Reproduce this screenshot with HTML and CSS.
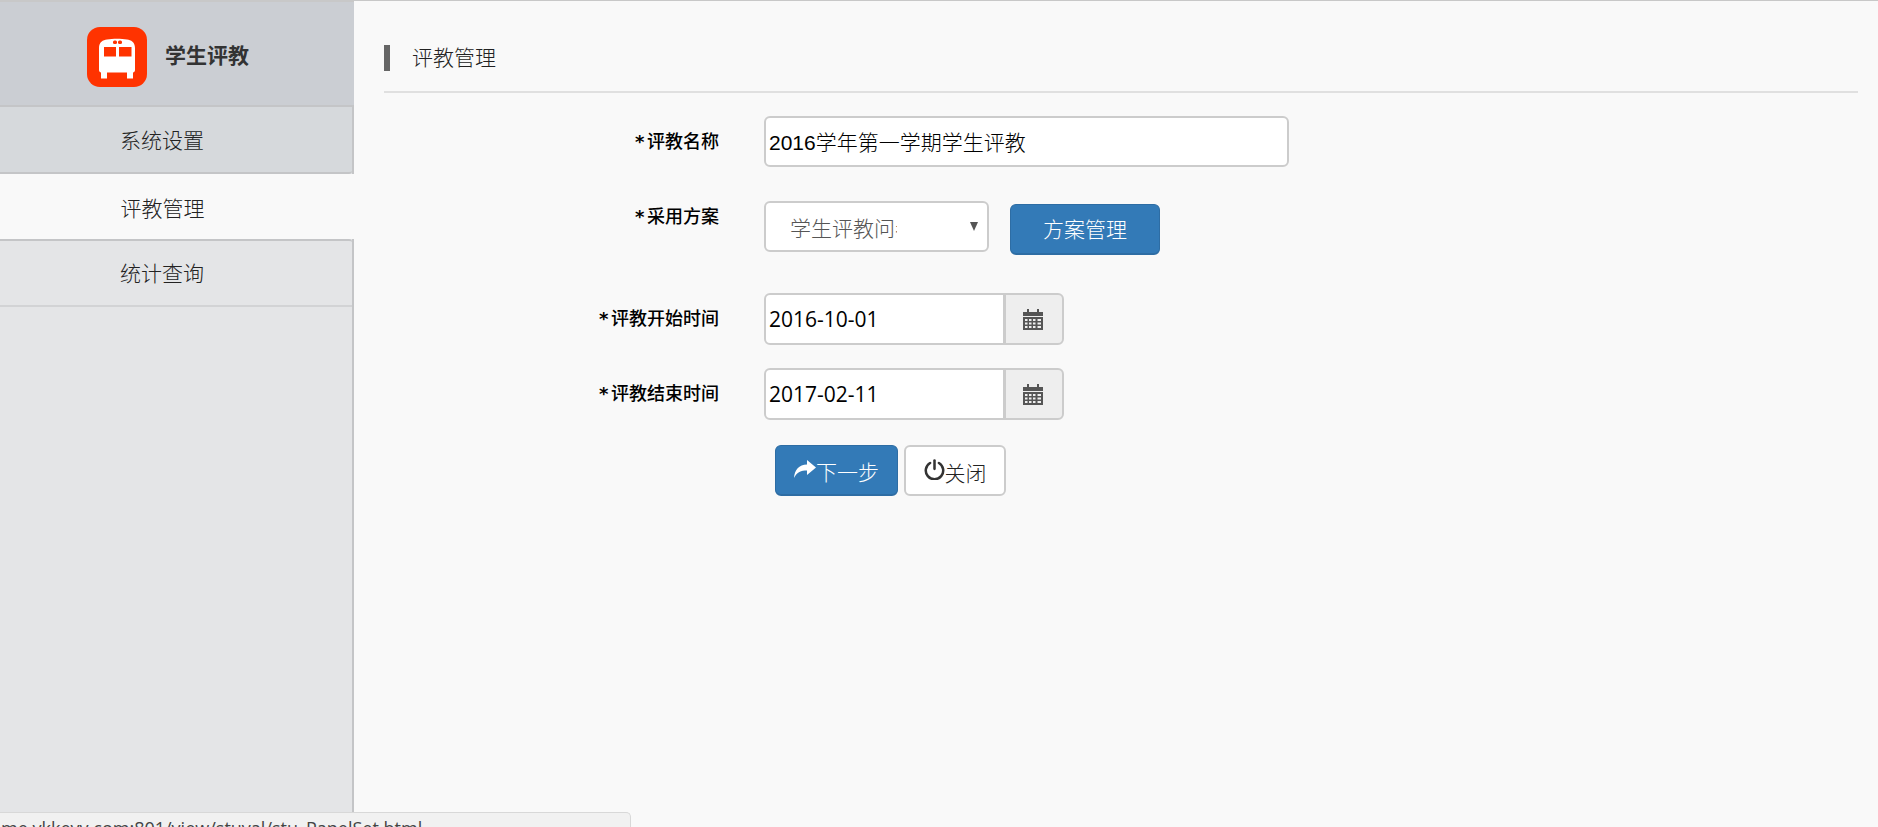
FILE: index.html
```html
<!DOCTYPE html>
<html lang="zh-CN">
<head>
<meta charset="utf-8">
<title>学生评教</title>
<link rel="stylesheet" href="styles.css">
</head>
<body>
<div class="page">
  <aside class="sidebar">
    <div class="brand">
      <svg class="logo" viewBox="0 0 60 60" aria-hidden="true">
        <rect width="60" height="60" rx="13" fill="#ff3300"/>
        <path fill="#fff" d="M12 21c0-6 4-8 8-8.500 6-1 14-1 20 0 4 .5 8 2.500 8 8.500v22c0 1.500-1 2.500-2 2.500v6h-6v-6H20v6h-6v-6c-1 0-2-1-2-2.500z"/>
        <rect x="17" y="20" width="12" height="9.500" fill="#ff3300"/>
        <rect x="32" y="20" width="12.500" height="9.500" fill="#ff3300"/>
        <rect x="26" y="13.500" width="4" height="3.500" rx="1.500" fill="#ff3300"/>
        <rect x="31" y="13.500" width="4" height="3.500" rx="1.500" fill="#ff3300"/>
      </svg>
      <span class="brand-name">学生评教</span>
    </div>
    <nav class="nav">
      <a class="nav-item nav-first">系统设置</a>
      <a class="nav-item nav-active">评教管理</a>
      <a class="nav-item nav-last">统计查询</a>
    </nav>
  </aside>

  <main class="main">
    <h1 class="title"><span class="title-bar"></span>评教管理</h1>
    <form class="form">
      <div class="row row-name">
        <label class="label"><span class="req">*</span>评教名称</label>
        <input class="field field-name" type="text" value="2016学年第一学期学生评教">
      </div>
      <div class="row row-plan">
        <label class="label label-plan"><span class="req">*</span>采用方案</label>
        <div class="select-wrap">
          <select class="select"><option>学生评教问卷</option></select>
          <span class="select-arrow"></span>
        </div>
        <button class="btn btn-primary btn-plan" type="button">方案管理</button>
      </div>
      <div class="row row-start">
        <label class="label"><span class="req">*</span>评教开始时间</label>
        <div class="date">
          <input class="field field-date" type="text" value="2016-10-01">
          <span class="addon">
            <svg class="cal" viewBox="0 0 20 21" aria-hidden="true">
              <path fill="#555" d="M0 3h4V0h2v3h8V0h2v3h4v4H0z"/>
              <path fill="#555" fill-rule="evenodd" d="M0 8h20v13H0zM2 10v2h2.500v-2zM6 10v2h2.500v-2zM10 10v2h2.500v-2zM14.500 10v2H18v-2zM2 13.500v2h2.500v-2zM6 13.500v2h2.500v-2zM10 13.500v2h2.500v-2zM14.500 13.500v2H18v-2zM2 17v2h2.500v-2zM6 17v2h2.500v-2zM10 17v2h2.500v-2zM14.500 17v2H18v-2z"/>
            </svg>
          </span>
        </div>
      </div>
      <div class="row row-end">
        <label class="label"><span class="req">*</span>评教结束时间</label>
        <div class="date">
          <input class="field field-date" type="text" value="2017-02-11">
          <span class="addon">
            <svg class="cal" viewBox="0 0 20 21" aria-hidden="true">
              <path fill="#555" d="M0 3h4V0h2v3h8V0h2v3h4v4H0z"/>
              <path fill="#555" fill-rule="evenodd" d="M0 8h20v13H0zM2 10v2h2.500v-2zM6 10v2h2.500v-2zM10 10v2h2.500v-2zM14.500 10v2H18v-2zM2 13.500v2h2.500v-2zM6 13.500v2h2.500v-2zM10 13.500v2h2.500v-2zM14.500 13.500v2H18v-2zM2 17v2h2.500v-2zM6 17v2h2.500v-2zM10 17v2h2.500v-2zM14.500 17v2H18v-2z"/>
            </svg>
          </span>
        </div>
      </div>
      <div class="actions">
        <button class="btn btn-primary btn-next" type="button">
          <svg class="icon-share" viewBox="0 0 22 18" aria-hidden="true">
            <path fill="#fff" d="M13 0l9 7.500-9 7.500v-4.500C7 10.500 3 12 0 18 .5 10 5 4.800 13 4.500z"/>
          </svg>下一步
        </button>
        <button class="btn btn-default btn-close" type="button">
          <svg class="icon-power" viewBox="0 0 20 20" aria-hidden="true">
            <path fill="none" stroke="#333" stroke-width="2.400" stroke-linecap="round" d="M5.800 3.800a8.300 8.300 0 1 0 8.400 0"/>
            <path fill="none" stroke="#333" stroke-width="2.400" stroke-linecap="round" d="M10 1.400v8"/>
          </svg>关闭
        </button>
      </div>
    </form>
  </main>
</div>
<div class="status"><span class="status-text">me.ykkeyy.com:801/view/stuval/stu_PanelSet.html</span></div>
</body>
</html>
```

FILE: styles.css
```css
* { box-sizing: border-box; }

html, body {
  margin: 0;
  height: 100%;
  overflow: hidden;
}

body {
  background: #f9f9f9;
  color: #333;
  font-family: "Open Sans", "Noto Sans CJK SC", sans-serif;
  font-size: 21px;
}

.page {
  display: flex;
  height: 827px;
  border-top: 1px solid #c8c8c8;
}

/* sidebar */
.sidebar {
  width: 354px;
  flex: none;
  display: flex;
  flex-direction: column;
  background: #e4e5e7;
  border-right: 2px solid #c4c5c7;
}

.brand {
  height: 106px;
  margin-right: -2px;
  display: flex;
  align-items: center;
  gap: 19px;
  padding: 0 0 0 87px;
  background: #cbced3;
  border-top: 1px solid #c8c8c8;
  border-bottom: 2px solid #c4c5c7;
}

.logo {
  width: 60px;
  height: 60px;
  flex: none;
  margin-top: 7px;
}

.brand-name {
  margin-top: 2px;
  margin-left: -1px;
  font-family: "Noto Sans CJK SC", sans-serif;
  font-weight: 700;
  line-height: 1;
  color: #333;
}

.nav {
  display: flex;
  flex-direction: column;
}

.nav-item {
  display: flex;
  align-items: center;
  justify-content: center;
  padding-right: 28px;
  font-family: "Noto Sans CJK SC", sans-serif;
  font-weight: 300;
  color: #222;
}

.nav-first {
  height: 67px;
  padding-bottom: 2px;
  background: #d6d9dc;
  border-bottom: 2px solid #c4c5c7;
  border-bottom-right-radius: 3px;
}

.nav-active {
  height: 65px;
  margin-right: -2px;
  padding-right: 29px;
  background: #f9f9f9;
}

.nav-last {
  height: 68px;
  padding-bottom: 2px;
  background: #e4e5e7;
  border-top: 2px solid #c4c5c7;
  border-bottom: 2px solid #d2d3d5;
  border-top-right-radius: 3px;
}

/* main */
.main {
  flex: 1;
  min-width: 0;
  padding: 0 20px 0 30px;
}

.title {
  display: flex;
  align-items: flex-start;
  height: 92px;
  margin: 0;
  padding: 25px 0 0;
  font-family: "Noto Sans CJK SC", sans-serif;
  font-size: 21px;
  font-weight: 300;
  line-height: 60px;
  color: #222;
  border-bottom: 2px solid #e0e0e0;
}

.title-bar {
  width: 6px;
  height: 26px;
  margin: 19px 22px 0 0;
  background: #666;
}

.form {
  display: flex;
  flex-direction: column;
}

.row {
  display: flex;
  align-items: flex-start;
}

.row-name { margin-top: 23px; }
.row-plan { margin-top: 34px; }
.row-start { margin-top: 38px; }
.row-end { margin-top: 23px; }

.label {
  width: 335px;
  flex: none;
  text-align: right;
  font-family: "Noto Sans CJK SC", serif;
  font-size: 18px;
  font-weight: 500;
  line-height: 24px;
  color: #000;
  padding-top: 12px;
}

.label-plan { padding-top: 2px; }

.req {
  display: inline-block;
  width: 12px;
  font-family: "DejaVu Sans", sans-serif;
  font-size: 18px;
  font-weight: 700;
  line-height: 1;
  text-align: left;
}

.field {
  height: 51px;
  margin: 0 0 0 45px;
  padding: 0 3px;
  background: #fff;
  border: 2px solid #ccc;
  border-radius: 6px;
  font-family: "Open Sans", "Noto Sans CJK SC", sans-serif;
  font-size: 21px;
  color: #000;
  outline: none;
}

.field-name {
  width: 525px;
  padding-bottom: 2px;
  font-family: "Liberation Sans", "Noto Sans CJK SC", sans-serif;
  font-weight: 300;
}

.select-wrap {
  position: relative;
  margin-left: 45px;
  width: 225px;
  height: 51px;
}

.select {
  width: 100%;
  height: 100%;
  padding: 0 90px 0 24px;
  appearance: none;
  -webkit-appearance: none;
  background: #fff;
  border: 2px solid #ccc;
  border-radius: 6px;
  font-family: "Noto Sans CJK SC", sans-serif;
  font-size: 21px;
  font-weight: 300;
  color: #555;
  outline: none;
}

.select-arrow {
  position: absolute;
  left: 206px;
  top: 21px;
  border-left: 4.500px solid transparent;
  border-right: 4.500px solid transparent;
  border-top: 9px solid #555;
}

.btn {
  display: inline-flex;
  align-items: center;
  justify-content: center;
  height: 51px;
  padding: 0;
  border-radius: 6px;
  font-family: "Noto Sans CJK SC", sans-serif;
  font-size: 21px;
  font-weight: 300;
  line-height: 1;
}

.btn-primary {
  background: #337ab7;
  border: 1px solid #2e6da4;
  border-bottom-width: 2px;
  color: #fff;
}

.btn-default {
  background: #fff;
  border: 2px solid #ccc;
  color: #222;
}

.btn-plan {
  width: 150px;
  margin: 3px 0 0 21px;
  padding-bottom: 2px;
}

.date {
  display: flex;
}

.field-date {
  width: 241px;
  height: 52px;
  border-radius: 6px 0 0 6px;
}

.addon {
  width: 60px;
  height: 52px;
  margin-left: -1px;
  display: flex;
  align-items: center;
  justify-content: center;
  background: #eee;
  border: 2px solid #ccc;
  border-radius: 0 6px 6px 0;
}

.cal {
  width: 20px;
  height: 21px;
  margin-right: 2px;
}

.actions {
  display: flex;
  gap: 6px;
  margin-top: 25px;
  margin-left: 391px;
}

.btn-next,
.btn-close {
  padding-top: 3px;
}

.btn-next {
  width: 123px;
}

.btn-close {
  width: 102px;
}

.icon-share {
  width: 22px;
  height: 18px;
  flex: none;
  margin-top: -6px;
}

.icon-power {
  width: 21px;
  height: 21px;
  flex: none;
  margin-top: -5px;
}

/* link preview over the page corner */
.status {
  position: absolute;
  left: 0;
  bottom: 0;
  width: 631px;
  height: 15px;
  overflow: hidden;
  background: #f1f1f1;
  border-top: 1px solid #d8d8d8;
  border-right: 1px solid #d8d8d8;
  border-top-right-radius: 5px;
}

.status-text {
  display: block;
  margin-left: 1px;
  margin-top: 4px;
  font-family: "Open Sans", sans-serif;
  font-size: 18px;
  line-height: 22px;
  white-space: nowrap;
  color: #444;
}
```
